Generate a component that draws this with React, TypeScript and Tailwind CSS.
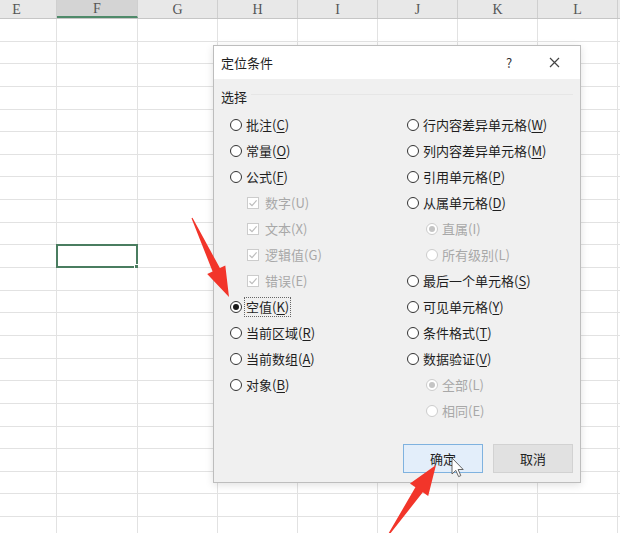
import React from 'react';

const cols = ['E', 'F', 'G', 'H', 'I', 'J', 'K', 'L', ''];
const colWidths = ['w-[80px] -ml-[23px]', 'w-[81px]', 'w-[80px]', 'w-[80px]', 'w-[80px]', 'w-[80px]', 'w-[80px]', 'w-[80px]', 'w-[80px]'];

type Opt = {
  label: string;
  key: string;
  underline?: boolean;
  kind: 'radio' | 'check' | 'sub';
  checked?: boolean;
  disabled?: boolean;
  focus?: boolean;
};

const leftOpts: Opt[] = [
  { label: '批注', key: 'C', underline: true, kind: 'radio' },
  { label: '常量', key: 'O', underline: true, kind: 'radio' },
  { label: '公式', key: 'F', underline: true, kind: 'radio' },
  { label: '数字', key: 'U', kind: 'check', checked: true, disabled: true },
  { label: '文本', key: 'X', kind: 'check', checked: true, disabled: true },
  { label: '逻辑值', key: 'G', kind: 'check', checked: true, disabled: true },
  { label: '错误', key: 'E', kind: 'check', checked: true, disabled: true },
  { label: '空值', key: 'K', underline: true, kind: 'radio', checked: true, focus: true },
  { label: '当前区域', key: 'R', underline: true, kind: 'radio' },
  { label: '当前数组', key: 'A', underline: true, kind: 'radio' },
  { label: '对象', key: 'B', underline: true, kind: 'radio' },
];

const rightOpts: Opt[] = [
  { label: '行内容差异单元格', key: 'W', underline: true, kind: 'radio' },
  { label: '列内容差异单元格', key: 'M', underline: true, kind: 'radio' },
  { label: '引用单元格', key: 'P', underline: true, kind: 'radio' },
  { label: '从属单元格', key: 'D', underline: true, kind: 'radio' },
  { label: '直属', key: 'I', kind: 'sub', checked: true, disabled: true },
  { label: '所有级别', key: 'L', kind: 'sub', disabled: true },
  { label: '最后一个单元格', key: 'S', underline: true, kind: 'radio' },
  { label: '可见单元格', key: 'Y', underline: true, kind: 'radio' },
  { label: '条件格式', key: 'T', underline: true, kind: 'radio' },
  { label: '数据验证', key: 'V', underline: true, kind: 'radio' },
  { label: '全部', key: 'L', kind: 'sub', checked: true, disabled: true },
  { label: '相同', key: 'E', kind: 'sub', disabled: true },
];

function Radio({ checked, disabled }: { checked?: boolean; disabled?: boolean }) {
  return (
    <span
      className={`flex h-[12px] w-[12px] shrink-0 items-center justify-center rounded-full border bg-white ${
        disabled ? 'border-[#cccccc]' : 'border-[#333333]'
      }`}
    >
      {checked && (
        <span className={`h-[6px] w-[6px] rounded-full ${disabled ? 'bg-[#c4c4c4]' : 'bg-[#1a1a1a]'}`} />
      )}
    </span>
  );
}

function Check() {
  return (
    <span className="flex h-[12px] w-[12px] shrink-0 items-center justify-center border border-[#cccccc] bg-white">
      <svg width="10" height="10" viewBox="0 0 10 10">
        <path d="M1.5 5.2 L4 7.6 L8.6 2.4" fill="none" stroke="#bdbdbd" strokeWidth="1.2" />
      </svg>
    </span>
  );
}

function Option({ o }: { o: Opt }) {
  const text = o.disabled ? 'text-[#a8a8a8]' : 'text-[#1f1f1f]';
  const indent = o.kind === 'check' ? 'pl-[17px] gap-[6px]' : o.kind === 'sub' ? 'pl-[19px] gap-[4px]' : 'gap-[4px]';
  return (
    <div className={`flex h-[26px] items-center ${indent}`}>
      {o.kind === 'check' ? <Check /> : <Radio checked={o.checked} disabled={o.disabled} />}
      <span
        className={`whitespace-nowrap text-[13px] leading-[16px] ${text} ${
          o.focus ? 'outline outline-1 outline-dotted outline-[#666666] outline-offset-[1px]' : ''
        }`}
      >
        {o.label}(
        {o.underline ? <span className="underline underline-offset-2">{o.key}</span> : o.key})
      </span>
    </div>
  );
}

function Sheet() {
  const rows = Array.from({ length: 23 });
  return (
    <div className="flex flex-col">
      <div className="flex h-[19px] border-b border-[#c6c6c6] bg-[#e8e8e8]">
        {cols.map((c, i) => (
          <div
            key={i}
            className={`${colWidths[i]} flex shrink-0 items-center justify-center border-r border-[#cfcfcf] font-['Liberation_Serif',serif] text-[14px] text-[#555555] ${
              c === 'F' ? 'border-b-2 border-b-[#4f8a6a] bg-[#d4d4d4]' : ''
            }`}
          >
            {c}
          </div>
        ))}
      </div>
      {rows.map((_, r) => (
        <div key={r} className="flex h-[22.65px]">
          {cols.map((c, i) => (
            <div key={i} className={`${colWidths[i]} relative shrink-0 border-r border-b border-[#e2e2e2] bg-white`}>
              {r === 10 && c === 'F' && (
                <div className="absolute -left-px -top-px h-[24px] w-[82px] border-2 border-[#4a7d60]">
                  <div className="absolute -bottom-[3px] -right-[3px] h-[5px] w-[5px] border border-white bg-[#4a7d60]" />
                </div>
              )}
            </div>
          ))}
        </div>
      ))}
    </div>
  );
}

function Dialog() {
  return (
    <div className="absolute left-[213px] top-[45px] flex h-[438px] w-[368px] flex-col border border-[#bdbdbd] bg-[#f0f0f0] shadow-[0_2px_8px_rgba(0,0,0,0.12)]">
      <div className="flex h-[33px] items-center bg-white pl-[7px] text-[13px] text-[#1f1f1f]">
        <span className="flex-1">定位条件</span>
        <span className="w-[20px] text-center text-[13px] text-[#333333]">?</span>
        <span className="ml-[27px] mr-[18px] flex w-[16px] justify-center">
          <svg width="11" height="11" viewBox="0 0 11 11">
            <path d="M1 1 L10 10 M10 1 L1 10" stroke="#444444" strokeWidth="1.2" />
          </svg>
        </span>
      </div>
      <div className="flex items-center pl-[7px] pr-[7px] pt-[8px]">
        <span className="text-[13px] leading-[20px] text-[#1f1f1f]">选择</span>
        <div className="ml-[4px] h-px flex-1 -translate-y-[3px] bg-[#e6e6e6]" />
      </div>
      <div className="mt-[5px] grid grid-cols-[177px_1fr] pl-[16px]">
        <div className="flex flex-col">
          {leftOpts.map((o, i) => (
            <Option key={i} o={o} />
          ))}
        </div>
        <div className="flex flex-col">
          {rightOpts.map((o, i) => (
            <Option key={i} o={o} />
          ))}
        </div>
      </div>
      <div className="mt-auto flex justify-end gap-[10px] pb-[9px] pr-[7px]">
        <button className="h-[29px] w-[80px] border border-[#7fb2df] bg-[#e3eefa] text-[13px] text-[#1f1f1f]">确定</button>
        <button className="h-[29px] w-[80px] border border-[#d2d2d2] bg-[#e1e1e1] text-[13px] text-[#1f1f1f]">取消</button>
      </div>
    </div>
  );
}

export default function App() {
  return (
    <div className="relative h-[533px] w-[620px] overflow-hidden bg-white font-['Noto_Sans_CJK_SC','Noto_Sans',sans-serif]">
      <Sheet />
      <Dialog />
      {/* red arrows + cursor */}
      <svg className="pointer-events-none absolute left-0 top-0" width="620" height="533" viewBox="0 0 620 533">
        <polygon
          points="191.5,218.2 212.6,271.5 207.2,274.1 229,297 225.3,265.6 219.9,268.1 192.5,217.8"
          fill="#f2352a"
        />
        <polygon
          points="389.6,534.4 422.8,492.3 428.2,496 436,465 410,483.6 415.4,487.3 388.4,533.6"
          fill="#f2352a"
        />
        <path
          d="M452 458 L452 474 L455.8 470.4 L458.6 476.6 L460.8 475.6 L458.1 469.5 L463.2 469.5 Z"
          fill="#ffffff"
          stroke="#555555"
          strokeWidth="0.9"
        />
      </svg>
    </div>
  );
}
